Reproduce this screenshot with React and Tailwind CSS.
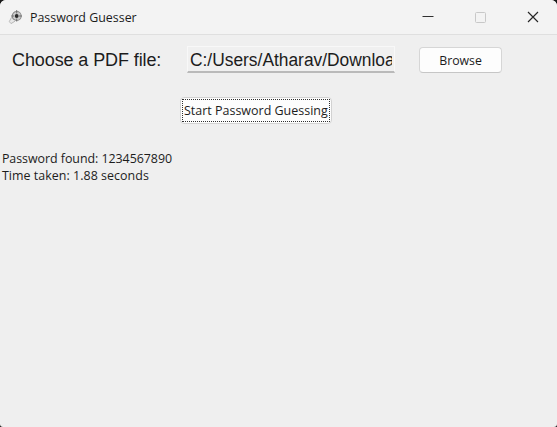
function AppIcon() {
  return (
    <svg width="16" height="16" viewBox="0 0 16 16" fill="none" className="shrink-0">
      <path d="M3.6 8.2 1.3 12.6 3 14.6 7 12.2" fill="#e8e8e8" stroke="#b8b8b8" strokeWidth="1" />
      <circle cx="8.7" cy="7" r="4.5" fill="#cccccc" stroke="#8c8c8c" strokeWidth="1.1" />
      <circle cx="8.7" cy="7" r="1.9" fill="#2a2a2a" />
      <path d="M8.7 1v3.5M8.7 9.5V12.5M3.2 7h3M11 7h3" stroke="#6a6a6a" strokeWidth="0.9" />
    </svg>
  );
}

function TitleBar() {
  return (
    <header className="flex h-[35px] items-center border-b border-[#dfdfdf] bg-[#f3f3f3] pl-2">
      <AppIcon />
      <h1 className="ml-[6px] origin-left scale-x-[0.955] whitespace-nowrap font-['Open_Sans','Noto_Sans',sans-serif] text-[13px] leading-[18px] text-[#1b1b1b]">
        Password Guesser
      </h1>
      <div className="ml-auto flex">
        <button aria-label="Minimize" className="flex h-[34px] w-[52px] items-center justify-center">
          <svg width="12" height="12" viewBox="0 0 12 12"><path d="M.5 5.5h11" stroke="#303030" /></svg>
        </button>
        <button aria-label="Maximize" className="flex h-[34px] w-[53px] items-center justify-center">
          <svg width="12" height="12" viewBox="0 0 12 12" fill="none"><rect x=".5" y="1.5" width="10" height="10" rx="1" stroke="#c8c8c8" /></svg>
        </button>
        <button aria-label="Close" className="mr-[-2px] flex h-[34px] w-[52px] items-center justify-center">
          <svg width="12" height="12" viewBox="0 0 12 12"><path d="m1 1 10 10M11 1 1 11" stroke="#262626" strokeWidth="1.15" /></svg>
        </button>
      </div>
    </header>
  );
}

export default function App() {
  return (
    <div className="h-[427px] w-[557px] bg-[#1a1a1a]">
      <div className="flex h-full flex-col overflow-hidden rounded-t-[6px] rounded-b-[3px] bg-[#efefef] font-['Open_Sans','Noto_Sans',sans-serif] text-[13px] text-[#1c1c1c]">
        <TitleBar />
        <main className="flex flex-col pt-[11px]">
          <div className="flex h-[27px] items-center pl-3">
            <label className="w-[175px] whitespace-nowrap font-['Liberation_Sans',Arial,sans-serif] text-[18px] leading-[26px] tracking-[-0.1px]">
              Choose a PDF file:
            </label>
            <div className="flex h-[27px] w-[208px] border border-[#f8f8f8] border-b-2 border-b-[#bababa] bg-[#f0f0f0] px-[2px]">
              <div className="w-full overflow-hidden">
                <div className="origin-left scale-x-[0.965] whitespace-nowrap font-['Liberation_Sans',Arial,sans-serif] text-[18px] leading-[26px]">
                  C:/Users/Atharav/Downloa
                </div>
              </div>
            </div>
            <button className="ml-[24px] flex h-[26px] w-[83px] justify-center rounded-[4px] border border-[#d6d6d6] border-b-[#c6c6c6] bg-[#fdfdfd] leading-[24px]">
              <span className="scale-x-[0.945]">Browse</span>
            </button>
          </div>
          <button className="ml-[180px] mt-[24px] flex h-[27px] w-[152px] rounded-[4px] border border-[#d2d2d2] bg-[#fdfdfd] p-px">
            <span className="flex h-[23px] w-full justify-center border border-dotted border-[#303030] leading-[20px]">
              <span className="scale-x-[0.96] whitespace-nowrap">Start Password Guessing</span>
            </span>
          </button>
          <div className="mt-[26px] origin-left scale-x-[0.955] whitespace-nowrap pl-[2px] leading-[17px]">
            <p className="tracking-[-0.04px]">Password found: 1234567890</p>
            <p className="tracking-[0.05px]">Time taken: 1.88 seconds</p>
          </div>
        </main>
      </div>
    </div>
  );
}
